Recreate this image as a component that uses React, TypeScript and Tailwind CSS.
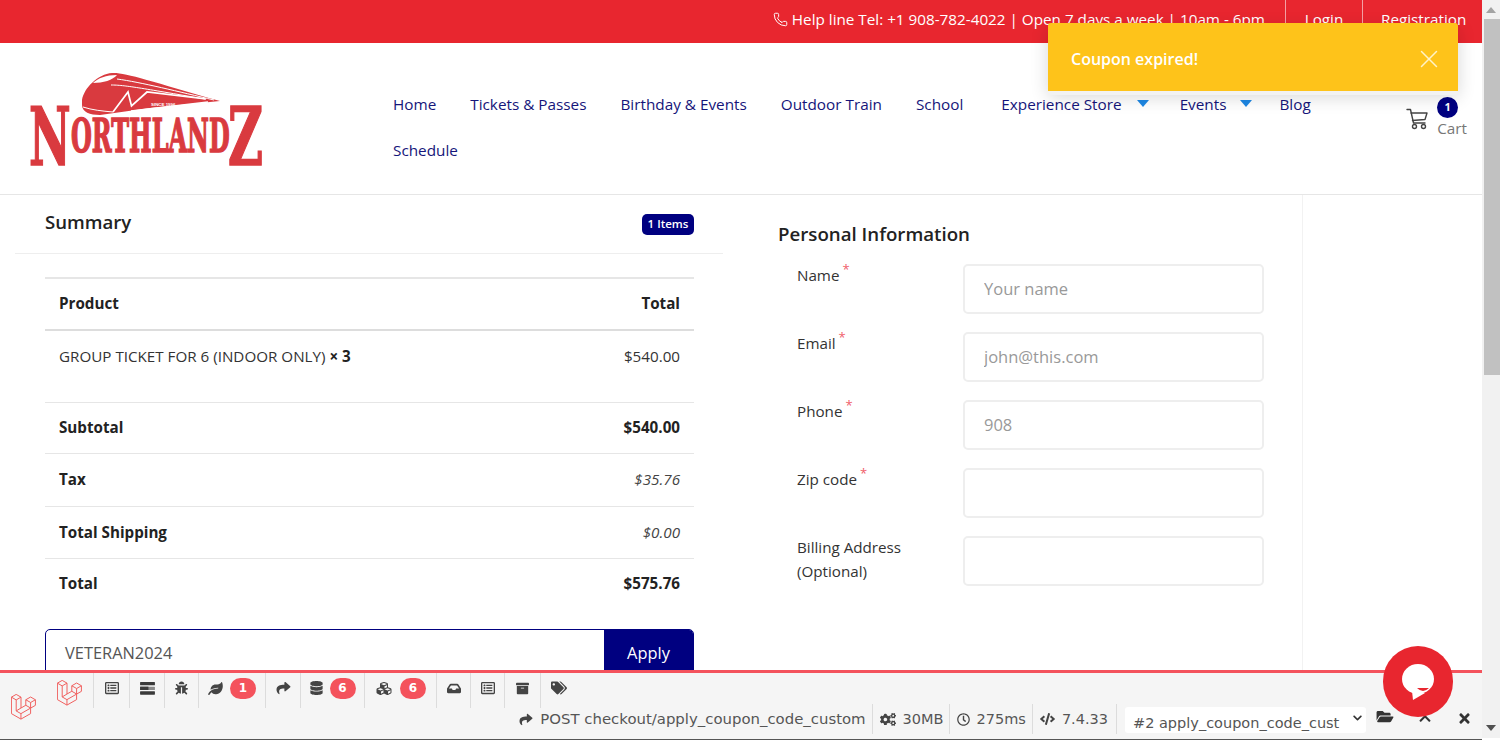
import React from "react";
import { Phone, X } from "lucide-react";
import {
  FaRegListAlt, FaBug, FaLeaf, FaShare, FaDatabase, FaCubes, FaInbox, FaArchive, FaTags,
  FaCogs, FaRegClock, FaCode, FaFolderOpen, FaChevronUp, FaChevronDown, FaTimes,
} from "react-icons/fa";

function Logo() {
  return (
    <svg viewBox="28 70 235 120" className="w-[235px] h-[120px] shrink-0">
      <path d="M82 100 C84 88 98 74 112 73 C124 72 150 81 220 101 L150 108 L100 115 C90 115 82 112 82 105 Z" fill="#d93a3f" />
      <path d="M93 83 C98 78 106 75 117 75 C113 80 103 83 93 83 Z" fill="#fff" />
      <path d="M117 79 C140 82 180 92 214 100 M111 85 C125 85 140 88 205 99" stroke="#fff" strokeWidth="1" fill="none" />
      <path d="M83 107 C92 110 102 111 113 112" stroke="#fff" strokeWidth="1" fill="none" />
      <path d="M113 112 L128 92 L131.5 106 L147 92 L206 99 M131 111 L208 102" stroke="#fff" strokeWidth="1.7" fill="none" />
      <text x="151" y="105.5" fontSize="4.4" fontWeight="700" fill="#fff" fontFamily="Liberation Sans, sans-serif">SINCE 1996</text>
      <g fill="#d93a3f" stroke="#d93a3f" strokeWidth="1.6" fontFamily="'DejaVu Serif', serif" fontWeight="700">
        <text transform="translate(29 165) scale(.57 1)" fontSize="80">N</text>
        <text transform="translate(71 151.5) scale(.52 1)" fontSize="46">ORTHLAND</text>
        <text transform="translate(228 165) scale(.6 1)" fontSize="80">Z</text>
      </g>
    </svg>
  );
}

function Caret({ className }: { className: string }) {
  return (
    <svg viewBox="0 0 12 7" className={className}>
      <path d="M0 0H12L6 7Z" fill="#1e88e5" />
    </svg>
  );
}

function CartIcon() {
  return (
    <svg viewBox="0 0 22 22" fill="none" stroke="#444" strokeWidth="1.4" strokeLinejoin="round" strokeLinecap="round" className="w-[22px] h-[22px] mt-[11px] mr-[9px] shrink-0">
      <path d="M1 1.5H4.5L7.5 15H19" />
      <path d="M5 5H21L19 11.5 6.5 12.5" />
      <circle cx="8.5" cy="18.5" r="2" />
      <circle cx="17.5" cy="18.5" r="2" />
    </svg>
  );
}

function LaravelMark({ className }: { className: string }) {
  return (
    <svg viewBox="0 0 50 52" fill="none" stroke="#f0605f" strokeWidth="2" strokeLinejoin="round" className={className}>
      <path d="M.8 6.3 10.4.8 20 6.3 10.4 11.8Z" />
      <path d="M.8 6.3V39.2L19.9 50.2 39.2 39.2V28.2" />
      <path d="M10.4 11.8V33.9L19.9 39.3 39.2 28.2" />
      <path d="M20 6.3V28L10.4 33.9" />
      <path d="M19.9 39.3V50.2" />
      <path d="M29.6 11.5 39.2 6 48.8 11.5 39.2 17Z" />
      <path d="M29.6 11.5V22.5L39.2 28V17" />
      <path d="M48.8 11.5V22.7L39.2 28.2" />
      <path d="M20 28 29.6 22.5" />
    </svg>
  );
}

function TasksIcon() {
  return (
    <svg viewBox="0 0 16 14" className="w-[15px] h-[13px]" fill="#3a3a3a">
      <rect x="0" y="0" width="16" height="3.6" rx=".6" />
      <rect x="0" y="5" width="16" height="3.6" rx=".6" fill="#8a8a8a" />
      <rect x="0" y="5" width="9" height="3.6" />
      <rect x="0" y="10" width="16" height="3.6" rx=".6" />
    </svg>
  );
}

function RedBadge({ n }: { n: number }) {
  return (
    <span className="w-[26px] h-[21px] rounded-full bg-[#f4525c] text-white text-[12px] font-bold flex items-center justify-center">
      {n}
    </span>
  );
}

function Tab({ w, children }: { w: string; children: React.ReactNode }) {
  return (
    <div className={`h-[35px] pb-[5px] border-l border-[#dcdcdc] flex items-center justify-center gap-[7px] text-[#444] ${w}`}>
      {children}
    </div>
  );
}

function SumRow({ h, label, value, italic, bold, border }: { h: string; label: string; value: string; italic?: boolean; bold?: boolean; border?: string }) {
  return (
    <div className={`flex items-center justify-between px-[14px] ${h} ${border ?? "border-t border-[#e6e6e6]"}`}>
      <span className="font-bold text-[#222]">{label}</span>
      <span className={`${italic ? "italic text-[#444]" : ""} ${bold ? "font-bold text-[#222]" : ""}`}>{value}</span>
    </div>
  );
}

function Field({ label, star, placeholder }: { label: string; star?: boolean; placeholder?: string }) {
  return (
    <div className="flex h-[50px] mb-[18px]">
      <div className="w-[166px] ml-[19px] -mt-[1px] text-[15.2px] text-[#333] leading-[24px]">
        {label}
        {star && <span className="text-[#f0606a] text-[13px] relative -top-[7px] ml-[3px]">*</span>}
      </div>
      <input
        placeholder={placeholder}
        className="w-[301px] h-[50px] border-2 border-[#eeeeee] rounded-[5px] px-[19px] pb-[2px] text-[16.5px] bg-white placeholder:text-[#999] outline-none"
      />
    </div>
  );
}

export default function App() {
  return (
    <div className="relative w-[1500px] h-[740px] overflow-hidden flex bg-white font-['Open_Sans',sans-serif] text-[15.2px] text-[#333]">
      <div className="w-[1482px] h-[740px] shrink-0 flex flex-col overflow-hidden">
        {/* top bar */}
        <div className="h-[43px] shrink-0 bg-[#e8262f] text-white text-[15.25px] flex justify-end items-stretch">
          <div className="flex items-center pr-[20px] pb-[4px]">
            <Phone className="w-[15px] h-[15px] mr-[4px]" strokeWidth={1.6} />
            <span>Help line Tel: +1 908-782-4022 | Open 7 days a week | 10am - 6pm</span>
          </div>
          <div className="w-[77px] border-l border-[#f3a0a4] flex items-center justify-center pb-[4px]">Login</div>
          <div className="w-[120px] border-l border-[#f3a0a4] flex items-center pl-[18px] pb-[4px]">Registration</div>
        </div>

        {/* nav */}
        <div className="h-[152px] shrink-0 border-b border-[#e6e6e6] flex items-start">
          <div className="ml-[28px] mt-[27px]"><Logo /></div>
          <div className="ml-[130px] mt-[38px] flex flex-col text-[15.3px] text-[#15157a] leading-[46px]">
            <div className="flex">
              <span className="mr-[34px]">Home</span>
              <span className="mr-[34px]">Tickets &amp; Passes</span>
              <span className="mr-[34px]">Birthday &amp; Events</span>
              <span className="mr-[34px]">Outdoor Train</span>
              <span className="mr-[38px]">School</span>
              <span className="flex items-center mr-[31px]">Experience Store<Caret className="w-[12px] h-[7px] ml-[15px] -mt-[2px]" /></span>
              <span className="flex items-center mr-[27px]">Events<Caret className="w-[12px] h-[7px] ml-[14px] -mt-[2px]" /></span>
              <span>Blog</span>
            </div>
            <div className="flex">
              <span>Schedule</span>
            </div>
          </div>
          <div className="ml-auto mr-[15px] mt-[54px] flex items-start">
            <CartIcon />
            <div className="flex flex-col items-start">
              <span className="w-[21px] h-[21px] rounded-full bg-[#000080] text-white text-[11px] font-bold flex items-center justify-center">1</span>
              <span className="text-[15.3px] text-[#777] leading-[20px]">Cart</span>
            </div>
          </div>
        </div>

        {/* content */}
        <div className="flex-1 flex min-h-0">
          <div className="w-[708px] ml-[15px] shrink-0">
            <div className="h-[59px] border-b border-[#eeeeee] px-[30px] flex items-center justify-between">
              <span className="text-[18.6px] font-semibold text-[#222] pb-[5px]">Summary</span>
              <span className="w-[52px] h-[21px] mr-[-1px] rounded-[5px] bg-[#000080] text-white text-[11.5px] font-semibold flex items-center justify-center">1 Items</span>
            </div>
            <div className="mx-[30px] mt-[23px] w-[649px]">
              <SumRow h="h-[52px] pb-[2px]" label="Product" value="Total" bold border="border-t-2 border-[#e6e6e6]" />
              <div className="flex justify-between px-[14px] pt-[14px] h-[73px] border-t-2 border-[#dddddd]">
                <span>GROUP TICKET FOR 6 (INDOOR ONLY) <b className="text-[#222]">× 3</b></span>
                <span>$540.00</span>
              </div>
              <SumRow h="h-[51px] pb-[2px]" label="Subtotal" value="$540.00" bold />
              <SumRow h="h-[53px] pb-[2px]" label="Tax" value="$35.76" italic />
              <SumRow h="h-[52px]" label="Total Shipping" value="$0.00" italic />
              <SumRow h="h-[50px]" label="Total" value="$575.76" bold />
              <div className="mt-[21px] h-[50px] flex border border-[#000080] rounded-[5px] overflow-hidden">
                <div className="flex-1 px-[19px] pb-[2px] flex items-center text-[16.4px] text-[#555]">VETERAN2024</div>
                <div className="w-[89px] bg-[#000080] pb-[2px] text-white text-[16.4px] flex items-center justify-center">Apply</div>
              </div>
            </div>
          </div>
          <div className="w-[581px] ml-[-1px] border-r border-[#f2f2f2] h-full pl-[56px] shrink-0">
            <div className="h-[69px] pt-[24px] text-[18.7px] font-semibold text-[#222] leading-[30px]">Personal Information</div>
            <Field label="Name" star placeholder="Your name" />
            <Field label="Email" star placeholder="john@this.com" />
            <Field label="Phone" star placeholder="908" />
            <Field label="Zip code" star />
            <Field label="Billing Address (Optional)" />
          </div>
        </div>
      </div>

      {/* scrollbar */}
      <div className="w-[18px] h-[738px] bg-[#f1f1f1] flex flex-col items-center shrink-0">
        <svg viewBox="0 0 10 6" className="w-[10px] h-[6px] mt-[7px] shrink-0"><path d="M5 0 10 6H0Z" fill="#a3a3a3" /></svg>
        <div className="w-[16px] h-[356px] bg-[#c1c1c1] mt-[6px] ml-[2px] shrink-0" />
        <svg viewBox="0 0 10 6" className="w-[10px] h-[6px] mt-auto mb-[7px] shrink-0"><path d="M0 0H10L5 6Z" fill="#505050" /></svg>
      </div>

      {/* toast */}
      <div className="absolute left-[1048px] top-[23px] w-[410px] h-[68px] bg-[#fec31a] rounded-t-[3px] flex items-center justify-between pl-[23px] pr-[14px] pt-[4px] text-white text-[16px] font-semibold shadow-[0_4px_0_#f2f2f2,0_6px_18px_rgba(0,0,0,0.16)]">
        <span>Coupon expired!</span>
        <X className="w-[30px] h-[30px] text-[#fff3c8]" strokeWidth={1.2} />
      </div>

      {/* debugbar */}
      <div className="absolute left-0 top-[670px] w-[1482px] h-[70px] bg-[#f5f5f5] border-t-[3px] border-[#f4535d] border-b border-b-[#555] flex font-['DejaVu_Sans',sans-serif] text-[#555]">
        <div className="w-[57px] shrink-0 pl-[11px] pt-[21px]">
          <LaravelMark className="w-[25px] h-[26px]" />
        </div>
        <div className="flex-1 flex flex-col min-w-0">
          <div className="h-[35px] flex shrink-0">
            <div className="w-[36px] pt-[7px]"><LaravelMark className="w-[25px] h-[26px]" /></div>
            <Tab w="w-[36px]"><FaRegListAlt className="w-[16px] h-[14px]" /></Tab>
            <Tab w="w-[35px]"><TasksIcon /></Tab>
            <Tab w="w-[34px]"><FaBug className="w-[13px] h-[14px]" /></Tab>
            <Tab w="w-[67px]"><FaLeaf className="w-[15px] h-[13px]" /><RedBadge n={1} /></Tab>
            <Tab w="w-[35px]"><FaShare className="w-[15px] h-[14px]" /></Tab>
            <Tab w="w-[64px]"><FaDatabase className="w-[13px] h-[14px]" /><RedBadge n={6} /></Tab>
            <Tab w="w-[72px]"><FaCubes className="w-[18px] h-[15px]" /><RedBadge n={6} /></Tab>
            <Tab w="w-[34px]"><FaInbox className="w-[14px] h-[13px]" /></Tab>
            <Tab w="w-[34px]"><FaRegListAlt className="w-[16px] h-[14px]" /></Tab>
            <Tab w="w-[36px]"><FaArchive className="w-[13px] h-[13px]" /></Tab>
            <Tab w="w-[36px]"><FaTags className="w-[16px] h-[14px]" /></Tab>
          </div>
          <div className="flex-1 flex items-start justify-end text-[14.5px] leading-[20px] text-[#555]">
            <div className="flex items-center mt-[1px]">
              <FaShare className="w-[14px] h-[13px] mr-[7px] text-[#444]" />
              <span className="text-[14.9px]">POST checkout/apply_coupon_code_custom</span>
            </div>
            <div className="flex items-center pl-[7px] ml-[6px] h-[30px] border-l border-[#dcdcdc] -mt-[4px]">
              <FaCogs className="w-[16px] h-[13px] mr-[7px] text-[#444]" /><span>30MB</span>
            </div>
            <div className="flex items-center pl-[7px] ml-[5px] h-[30px] border-l border-[#dcdcdc] -mt-[4px]">
              <FaRegClock className="w-[13px] h-[13px] mr-[7px] text-[#444]" /><span>275ms</span>
            </div>
            <div className="flex items-center pl-[7px] ml-[6px] h-[30px] border-l border-[#dcdcdc] -mt-[4px]">
              <FaCode className="w-[15px] h-[12px] mr-[7px] text-[#444]" /><span>7.4.33</span>
            </div>
            <div className="ml-[8px] border-l border-[#dcdcdc] h-[30px] -mt-[4px]" />
            <div className="ml-[8px] w-[241px] h-[26px] -mt-[1px] bg-white rounded-[3px] flex items-center justify-between pl-[8px] pr-[3px] overflow-hidden shrink-0">
              <span className="whitespace-nowrap pt-[5px]">#2 apply_coupon_code_cust</span>
              <FaChevronDown className="w-[11px] h-[10px] text-[#333] -mt-[4px]" />
            </div>
            <div className="w-[116px] shrink-0 flex items-center text-[#333] mt-[3px] pl-[10px]">
              <FaFolderOpen className="w-[18px] h-[15px] -mt-[4px]" />
              <FaChevronUp className="w-[16px] h-[13px] ml-[23px]" />
              <FaTimes className="w-[13px] h-[15px] ml-[25px]" />
            </div>
          </div>
        </div>
      </div>

      {/* chat */}
      <div className="absolute left-[1383px] top-[646px] w-[70px] h-[71px] rounded-full bg-[#e8262f] flex items-center justify-center">
        <svg viewBox="0 0 32 36" className="w-[32px] h-[36px]">
          <ellipse cx="16" cy="15" rx="16" ry="15" fill="#fff" />
          <path d="M10 27 11 36 23 29Z" fill="#fff" />
          <path d="M15 24 Q21 30 27 24Z" fill="#e8262f" />
        </svg>
      </div>
    </div>
  );
}
